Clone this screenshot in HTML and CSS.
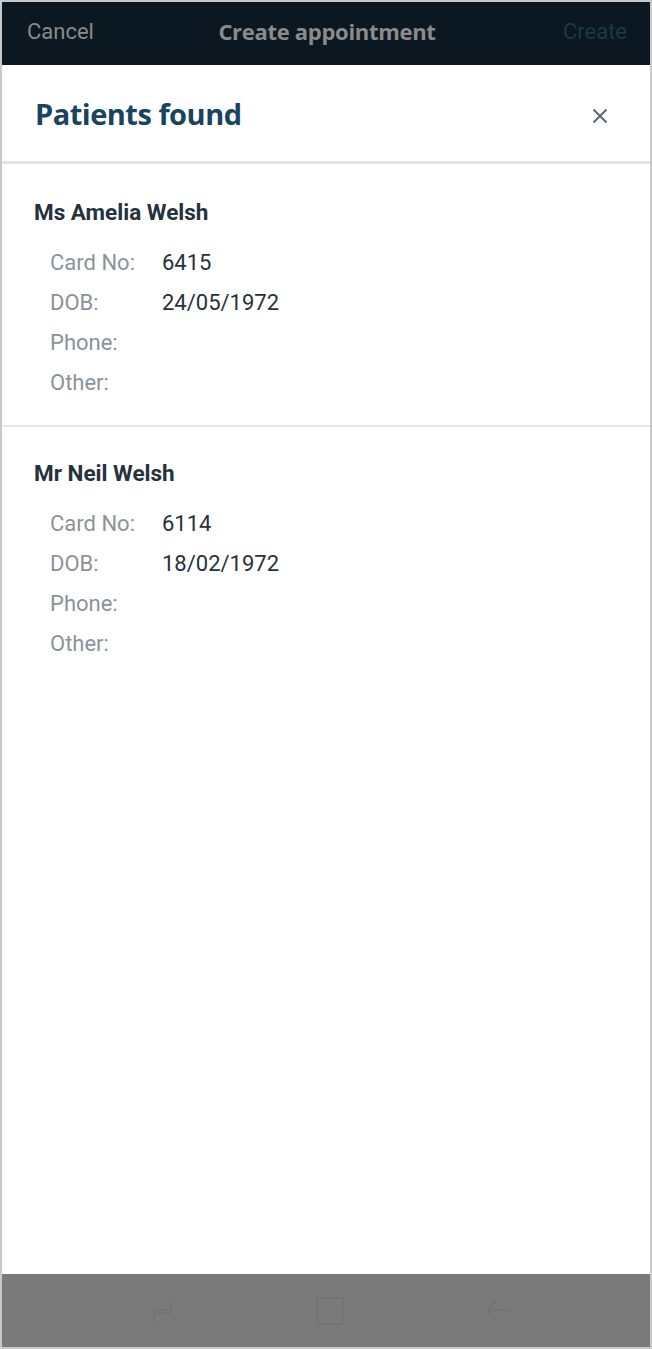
FILE: index.html
```html
<!DOCTYPE html>
<html lang="en">
<head>
<meta charset="utf-8">
<title>Create appointment</title>
<link rel="stylesheet" href="styles.css">
</head>
<body>
<div class="frame">
  <header class="topbar">
    <span class="tb-cancel">Cancel</span>
    <span class="tb-title">Create appointment</span>
    <span class="tb-create">Create</span>
  </header>
  <div class="modal-head">
    <h1 class="modal-title">Patients found</h1>
    <svg class="close" width="16" height="16" viewBox="0 0 16 16"><path d="M1.5 1.5L14.5 14.5M14.5 1.5L1.5 14.5" stroke="#5d6770" stroke-width="2" fill="none"/></svg>
  </div>
  <section class="patient">
    <h2 class="p-name">Ms Amelia Welsh</h2>
    <dl class="p-info">
      <dt>Card No:</dt><dd>6415</dd>
      <dt>DOB:</dt><dd>24/05/1972</dd>
      <dt>Phone:</dt><dd></dd>
      <dt>Other:</dt><dd></dd>
    </dl>
  </section>
  <section class="patient last">
    <h2 class="p-name">Mr Neil Welsh</h2>
    <dl class="p-info">
      <dt>Card No:</dt><dd>6114</dd>
      <dt>DOB:</dt><dd>18/02/1972</dd>
      <dt>Phone:</dt><dd></dd>
      <dt>Other:</dt><dd></dd>
    </dl>
  </section>
  <div class="spacer"></div>
  <nav class="navbar">
    <svg width="24" height="30" viewBox="0 0 24 30"><path d="M4 26V17H21M21 4V14H5" stroke="#717578" stroke-width="2" fill="none"/></svg>
    <svg width="28" height="28" viewBox="0 0 28 28"><rect x="1" y="1" width="26" height="26" stroke="#717578" stroke-width="2" fill="none"/></svg>
    <svg width="24" height="30" viewBox="0 0 24 30"><path d="M23 14H3M11 4L2 14L11 26" stroke="#717578" stroke-width="2" fill="none"/></svg>
  </nav>
</div>
</body>
</html>
```
FILE: styles.css
```css
* { box-sizing: border-box; }
html, body { margin: 0; padding: 0; background: #fff; }
.frame {
  width: 652px;
  height: 1349px;
  border: 2px solid #c9c9c9;
  display: flex;
  flex-direction: column;
  background: #fff;
  font-family: Roboto, "Liberation Sans", sans-serif;
}
.topbar {
  height: 63px;
  flex: none;
  background: #0b1821;
  display: grid;
  grid-template-columns: 1fr auto 1fr;
  align-items: center;
  padding: 0 23px 5px 25px;
  font-size: 22px;
}
.tb-cancel { color: #8a8a8a; justify-self: start; }
.tb-title {
  color: #8b8b8b;
  font-family: "Open Sans", sans-serif;
  font-weight: 700;
  font-size: 22px;
  letter-spacing: -0.3px;
}
.tb-create { color: #1b3947; justify-self: end; }
.modal-head {
  height: 99px;
  flex: none;
  border-bottom: 3px solid #e1e3e6;
  display: flex;
  align-items: center;
  justify-content: space-between;
  padding: 0 42px 0 33px;
}
.modal-title {
  margin: 0;
  font-family: "Open Sans", sans-serif;
  font-weight: 700;
  font-size: 29px;
  letter-spacing: -0.5px;
  color: #194460;
}
.close { display: block; margin-top: 6px; }
.patient {
  flex: none;
  padding: 36px 0 23px 32px;
  border-bottom: 2px solid #e6e7e8;
}
.patient.last { border-bottom: none; padding-top: 34px; }
.p-name {
  margin: 0;
  font-size: 22.5px;
  line-height: 24px;
  font-weight: 700;
  color: #25313c;
}
.p-info {
  margin: 18px 0 0 16px;
  display: grid;
  grid-template-columns: 112px 1fr;
  grid-auto-rows: 40px;
  align-items: center;
  font-size: 22px;
}
.p-info dt { color: #8a939a; }
.p-info dd { margin: 0; color: #27313b; }
.spacer { flex: 1; }
.navbar {
  height: 73px;
  flex: none;
  background: #7a7a7a;
  display: flex;
  align-items: center;
  justify-content: space-between;
  padding: 0 140px 0 148px;
}
.navbar svg { display: block; }
```
